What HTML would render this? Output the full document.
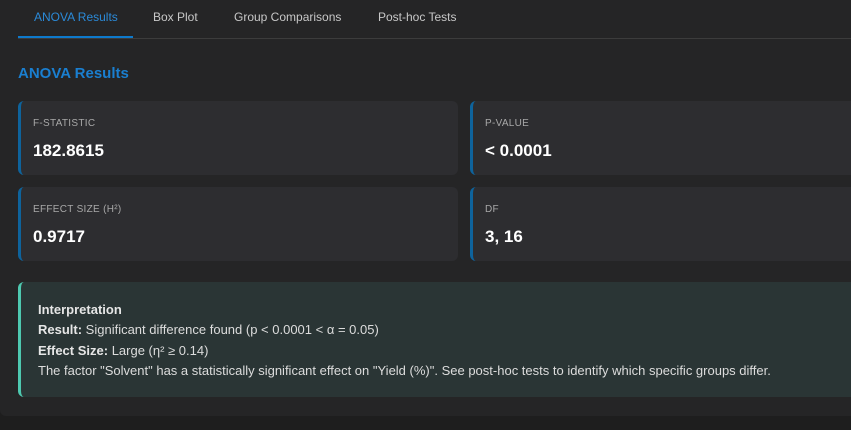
<!DOCTYPE html>
<html><head><style>
body{margin:0;width:851px;height:430px;background:#1e1e1e;overflow:hidden;font-family:"Liberation Sans",sans-serif;}
.panel{position:absolute;left:0;top:-10px;width:900px;height:426px;background:#252526;border-radius:6px;}
.tabs{position:absolute;left:18px;top:0;width:900px;height:38px;border-bottom:1px solid #3c3c3c;}
.tab{position:absolute;top:10px;font-size:12px;color:#c8c8c8;}
.tab.a{color:#2b8ad8;}
.ul{position:absolute;left:18px;top:36px;width:115px;height:2px;background:#0e7acc;}
h2{position:absolute;left:18px;top:65px;margin:0;font-size:15px;font-weight:bold;color:#1a7fd0;}
.card{position:absolute;height:74px;background:#2d2d30;border-left:3px solid #0e639c;border-radius:6px;box-sizing:border-box;}
.lab{position:absolute;left:12px;top:17px;font-size:10px;color:#a8a8a8;letter-spacing:.3px;}
.val{position:absolute;left:12px;top:40px;font-size:17px;font-weight:bold;color:#fff;}
.int{position:absolute;left:18px;top:282px;width:900px;height:115px;background:#2a3535;border-left:3px solid #4ec9b0;border-radius:6px;box-sizing:border-box;padding:18px 0 0 17px;font-size:13px;color:#dcdcdc;line-height:20.4px;}
b{color:#e6e6e6}
</style></head><body>
<div class="panel"></div>
<div class="tabs"></div>
<div class="tab a" style="left:34px">ANOVA Results</div>
<div class="tab" style="left:153px">Box Plot</div>
<div class="tab" style="left:234px">Group Comparisons</div>
<div class="tab" style="left:378px">Post-hoc Tests</div>
<div class="ul"></div>
<h2>ANOVA Results</h2>
<div class="card" style="left:18px;top:101px;width:440px"><div class="lab">F-STATISTIC</div><div class="val">182.8615</div></div>
<div class="card" style="left:470px;top:101px;width:440px"><div class="lab">P-VALUE</div><div class="val">&lt; 0.0001</div></div>
<div class="card" style="left:18px;top:187px;width:440px"><div class="lab">EFFECT SIZE (H²)</div><div class="val">0.9717</div></div>
<div class="card" style="left:470px;top:187px;width:440px"><div class="lab">DF</div><div class="val">3, 16</div></div>
<div class="int"><b>Interpretation</b><br><b>Result:</b> Significant difference found (p &lt; 0.0001 &lt; α = 0.05)<br><b>Effect Size:</b> Large (η² ≥ 0.14)<br>The factor "Solvent" has a statistically significant effect on "Yield (%)". See post-hoc tests to identify which specific groups differ.</div>
</body></html>
